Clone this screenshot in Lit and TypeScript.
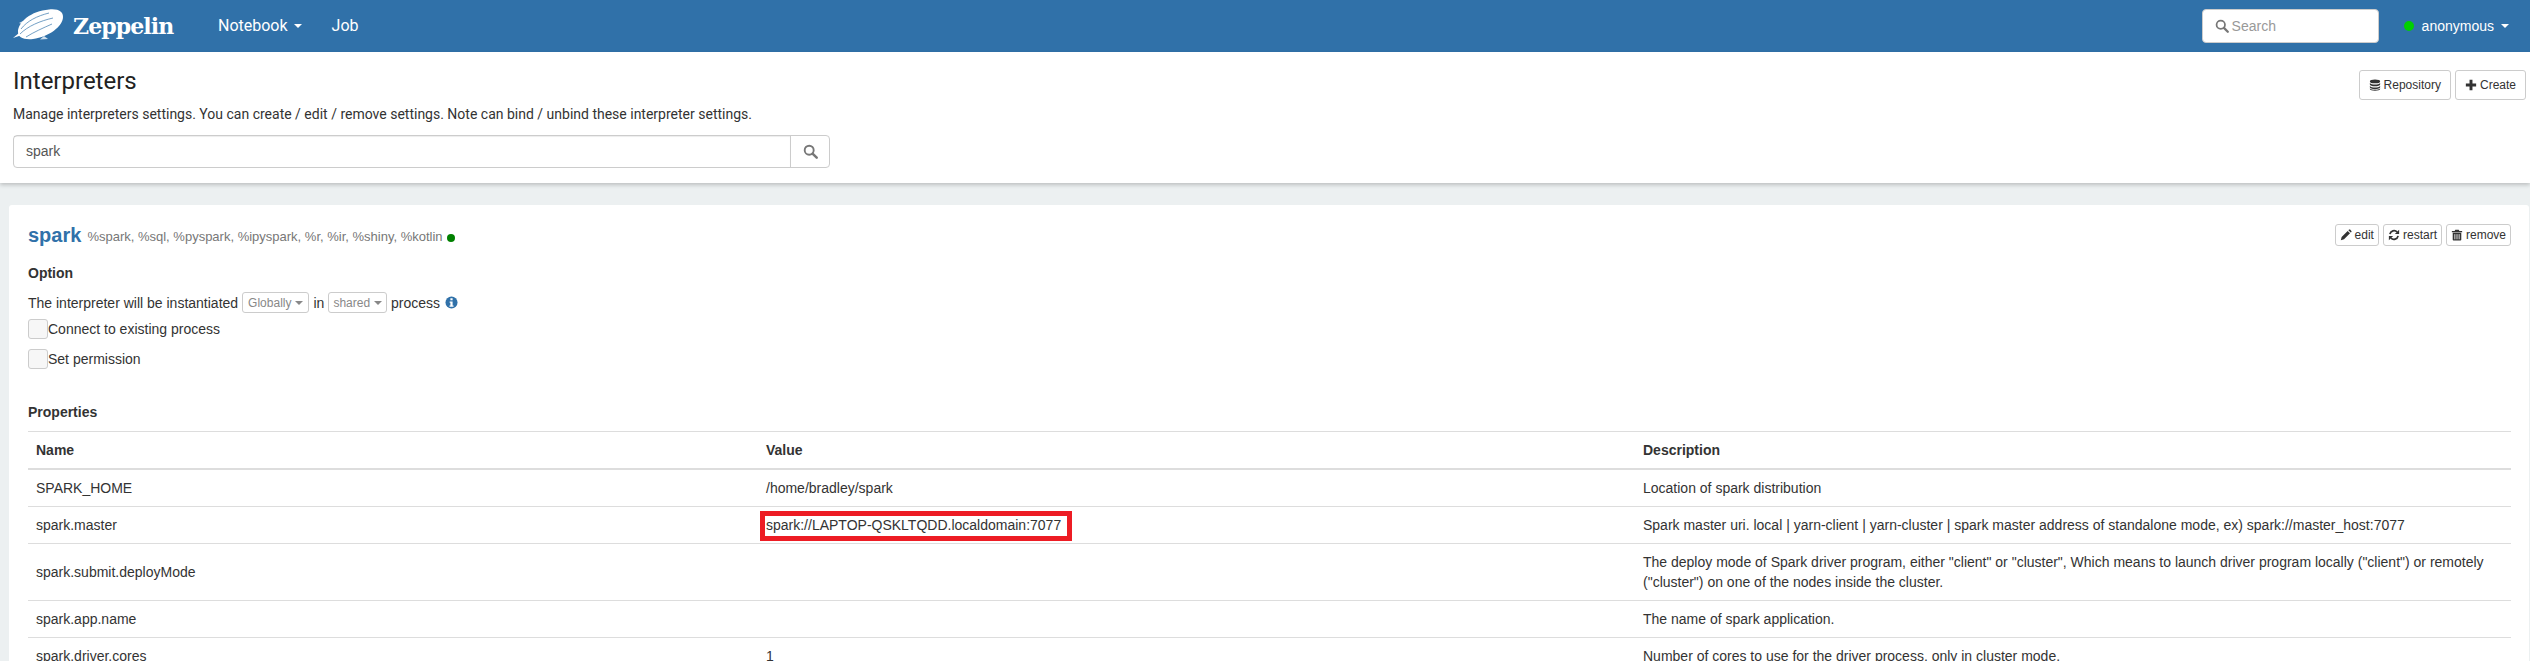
import { LitElement, html, css, svg } from "lit";
import { customElement } from "lit/decorators.js";

const searchIcon = (cls: string) => html`<svg class=${cls} viewBox="0 0 16 16"><circle cx="6.600" cy="6.600" r="4.800" fill="none" stroke="currentColor" stroke-width="2"/><path d="M10.200 10.200 14.600 14.600" stroke="currentColor" stroke-width="2.600" stroke-linecap="round"/></svg>`;
const dbIcon = html`<svg class="ic" viewBox="0 0 14 14"><ellipse cx="7" cy="2.800" rx="6" ry="2.300" fill="currentColor"/><path d="M1 4.700v1.600c0 1.300 2.700 2.200 6 2.200s6-.9 6-2.200V4.700c-1 1.200-3.400 1.800-6 1.800S2 5.900 1 4.700zM1 8.200v1.500c0 1.300 2.700 2.200 6 2.200s6-.9 6-2.200V8.200c-1 1.200-3.400 1.800-6 1.800S2 9.400 1 8.200z" fill="currentColor"/><path d="M1 11v.6c0 1.200 2.700 2 6 2s6-.8 6-2V11c-1 1-3.400 1.500-6 1.500S2 12 1 11z" fill="currentColor"/></svg>`;
const plusIcon = html`<svg class="ic" viewBox="0 0 14 14"><path d="M5.300 1h3.400v4.300H13v3.400H8.700V13H5.300V8.700H1V5.300h4.300z" fill="currentColor"/></svg>`;
const pencilIcon = html`<svg class="ic" viewBox="0 0 14 14"><path d="M1 13l.9-3.700 7-7 2.800 2.800-7 7zM9.800 1.400l.8-.7c.4-.3.9-.3 1.200 0l1.500 1.500c.3.3.3.8 0 1.200l-.8.800z" fill="currentColor"/></svg>`;
const refreshIcon = html`<svg class="ic" viewBox="0 0 14 14"><path d="M2.200 6A5 5 0 0 1 10.700 3.500" fill="none" stroke="currentColor" stroke-width="2"/><path d="M13 .8v5H8z" fill="currentColor"/><path d="M11.800 8A5 5 0 0 1 3.300 10.500" fill="none" stroke="currentColor" stroke-width="2"/><path d="M1 13.200v-5h5z" fill="currentColor"/></svg>`;
const trashIcon = html`<svg class="ic" viewBox="0 0 14 14"><path d="M5 .8h4l.8 1.400H13v1.500H1V2.200h3.200zM2 4.500h10v8c0 .6-.4 1-1 1H3c-.6 0-1-.4-1-1z" fill="currentColor"/><path d="M4.500 6v6M7 6v6M9.500 6v6" stroke="#fff" stroke-width="1"/></svg>`;
const infoIcon = html`<svg class="info" viewBox="0 0 14 14"><circle cx="7" cy="7" r="6.500" fill="#3071a9"/><rect x="5.800" y="2.400" width="2.400" height="2.200" fill="#fff"/><path d="M5 5.800h3.200v4.400H9.200v1.400H4.800v-1.400h1V7.200H5z" fill="#fff"/></svg>`;

const logo = svg`<svg class="logo" viewBox="0 0 52 32">
  <path d="M0 30l9-3-3-2z" fill="#fff"/>
  <path d="M6 15l4-2 1 4z" fill="#fff" opacity=".8"/>
  <path d="M27 31.500l8-.5-4-3z" fill="#cfe0ee"/>
  <path d="M5 24C5 14 18 3 36 1.500 46 .5 50 4 50 9 50 18 36 29 20 31 10 32 5 29 5 24z" fill="#fff"/>
  <path d="M8 21C14 13 24 8 36 5M7 26C15 18 27 13 40 10M13 29C21 24 30 20 39 16" fill="none" stroke="#3071a9" stroke-width=".9" opacity=".75"/>
</svg>`;

const rows: [string, string, string][] = [
  ["SPARK_HOME", "/home/bradley/spark", "Location of spark distribution"],
  ["spark.master", "spark://LAPTOP-QSKLTQDD.localdomain:7077", "Spark master uri. local | yarn-client | yarn-cluster | spark master address of standalone mode, ex) spark://master_host:7077"],
  ["spark.submit.deployMode", "", 'The deploy mode of Spark driver program, either "client" or "cluster", Which means to launch driver program locally ("client") or remotely ("cluster") on one of the nodes inside the cluster.'],
  ["spark.app.name", "", "The name of spark application."],
  ["spark.driver.cores", "1", "Number of cores to use for the driver process, only in cluster mode."],
];

@customElement("app-root")
export class AppRoot extends LitElement {
  static styles = css`
    :host { display: block; height: 661px; overflow: hidden; background: #ecf0f1; font: 14px/20px "Liberation Sans", Arial, sans-serif; color: #333; }
    * { box-sizing: border-box; }
    .ic { width: 12px; height: 12px; flex: none; color: #333; }
    .nav { height: 52px; background: #3071a9; display: flex; align-items: center; color: #fff; padding: 0 0 0 13px; }
    .logo { width: 52px; height: 32px; flex: none; margin-bottom: 4px; }
    .brand { font: bold 22px/32px "DejaVu Serif", serif; letter-spacing: -0.9px; margin-left: 8px; width: 96px; }
    .menu { display: flex; margin-left: 49px; gap: 30px; font: 16px/20px Roboto, sans-serif; align-items: center; }
    .menu span { display: flex; align-items: center; }
    .caret { display: inline-block; width: 0; height: 0; border-top: 4px solid currentColor; border-left: 4px solid transparent; border-right: 4px solid transparent; margin-left: 6px; }
    .nav-search { margin-left: auto; width: 177px; height: 34px; background: #fff; border: 1px solid #ccc; border-radius: 4px; display: flex; align-items: center; padding-left: 12px; gap: 3px; color: #999; font-size: 14px; }
    .nav-search svg { width: 14px; height: 14px; color: #777; }
    .user { display: flex; align-items: center; margin: 0 21px 0 25px; }
    .dot { width: 10px; height: 10px; border-radius: 50%; background: #00d000; margin-right: 8px; }
    .user .caret { margin-left: 7px; }
    .head { background: #fff; height: 131px; padding: 16px 4px 0 13px; display: flex; justify-content: space-between; box-shadow: 0 2px 4px rgba(0,0,0,.2); position: relative; }
    h3 { margin: 0; font: 400 24px/26px Roboto, sans-serif; color: #222; }
    .head p { margin: 10px 0 0; font: 14px/20px Roboto, sans-serif; }
    .group { display: flex; width: 817px; height: 33px; margin-top: 11px; border: 1px solid #ccc; border-radius: 4px; }
    .group .q { flex: 1; padding: 0 12px; line-height: 31px; color: #555; box-shadow: inset 0 1px 1px rgba(0,0,0,.075); }
    .group .b { width: 39px; border-left: 1px solid #ccc; display: flex; align-items: center; justify-content: center; color: #777; }
    .group svg { width: 15px; height: 15px; }
    .btns { display: flex; gap: 4px; margin-top: 2px; }
    .btn { display: inline-flex; align-items: center; gap: 3px; border: 1px solid #ccc; border-radius: 3px; background: #fff; font-size: 12px; line-height: 18px; color: #333; white-space: nowrap; }
    .big { height: 30px; padding: 0 9px; }
    .small { height: 22px; padding: 0 4px; }
    .card { background: #fff; margin: 22px 1px 0 9px; padding: 19px 18px 0 19px; border-radius: 3px; height: 500px; }
    .title { display: flex; align-items: center; height: 22px; }
    .name { font: bold 20px/22px "Liberation Sans", sans-serif; color: #3071a9; }
    .tags { font: 13px/16px "Liberation Sans", sans-serif; color: #777; margin: 4px 0 0 6px; }
    .status { width: 8px; height: 8px; border-radius: 50%; background: #008000; margin: 5px 0 0 4px; }
    .title .btns { margin: 0 0 0 auto; }
    .opt { font-weight: bold; margin-top: 17px; }
    .line { display: flex; align-items: center; height: 21px; margin-top: 9px; }
    .sel { display: inline-flex; align-items: center; height: 21px; padding: 0 5px; border: 1px solid #ccc; border-radius: 3px; font-size: 12px; color: #888; }
    .sel .caret { margin-left: 4px; border-width: 4px 4px 0; }
    .s1 { margin: 0 4px; }
    .s2 { margin: 0 4px; padding: 0 4px; }
    .info { width: 13px; height: 13px; margin-left: 5px; }
    .check { display: flex; align-items: center; height: 20px; }
    .box { width: 20px; height: 20px; background: #f7f7f7; border: 1px solid #ccc; border-radius: 3px; }
    .c1 { margin-top: 6px; } .c2 { margin-top: 10px; }
    .props { font-weight: bold; margin-top: 33px; }
    table { border-collapse: separate; border-spacing: 0; table-layout: fixed; width: 2483px; margin-top: 9px; border-top: 1px solid #ddd; }
    th, td { text-align: left; padding: 8px; border-bottom: 1px solid #ddd; vertical-align: middle; line-height: 20px; }
    th { border-bottom-width: 2px; }
    .cn { width: 730px; } .cv { width: 877px; }
    .mark { position: relative; }
    .mark i { position: absolute; left: 2px; top: 4px; width: 312px; height: 30px; border: 5px solid #ed1c24; }
  `;

  render() {
    return html`
      <div class="nav">
        ${logo}
        <span class="brand">Zeppelin</span>
        <div class="menu"><span>Notebook<i class="caret"></i></span><span>Job</span></div>
        <div class="nav-search">${searchIcon("")}Search</div>
        <div class="user"><i class="dot"></i>anonymous<i class="caret"></i></div>
      </div>
      <div class="head">
        <div>
          <h3>Interpreters</h3>
          <p>Manage interpreters settings. You can create / edit / remove settings. Note can bind / unbind these interpreter settings.</p>
          <div class="group"><div class="q">spark</div><div class="b">${searchIcon("")}</div></div>
        </div>
        <div class="btns">
          <span class="btn big">${dbIcon}Repository</span>
          <span class="btn big">${plusIcon}Create</span>
        </div>
      </div>
      <div class="card">
        <div class="title">
          <span class="name">spark</span>
          <span class="tags">%spark, %sql, %pyspark, %ipyspark, %r, %ir, %shiny, %kotlin</span>
          <i class="status"></i>
          <div class="btns">
            <span class="btn small">${pencilIcon}edit</span>
            <span class="btn small">${refreshIcon}restart</span>
            <span class="btn small">${trashIcon}remove</span>
          </div>
        </div>
        <div class="opt">Option</div>
        <div class="line">The interpreter will be instantiated<span class="sel s1">Globally<i class="caret"></i></span>in<span class="sel s2">shared<i class="caret"></i></span>process${infoIcon}</div>
        <div class="check c1"><span class="box"></span>Connect to existing process</div>
        <div class="check c2"><span class="box"></span>Set permission</div>
        <div class="props">Properties</div>
        <table>
          <thead><tr><th class="cn">Name</th><th class="cv">Value</th><th>Description</th></tr></thead>
          <tbody>
            ${rows.map(([n, v, d], i) => html`<tr><td>${n}</td><td class=${i === 1 ? "mark" : ""}>${v}${i === 1 ? html`<i></i>` : ""}</td><td>${d}</td></tr>`)}
          </tbody>
        </table>
      </div>
    `;
  }
}
